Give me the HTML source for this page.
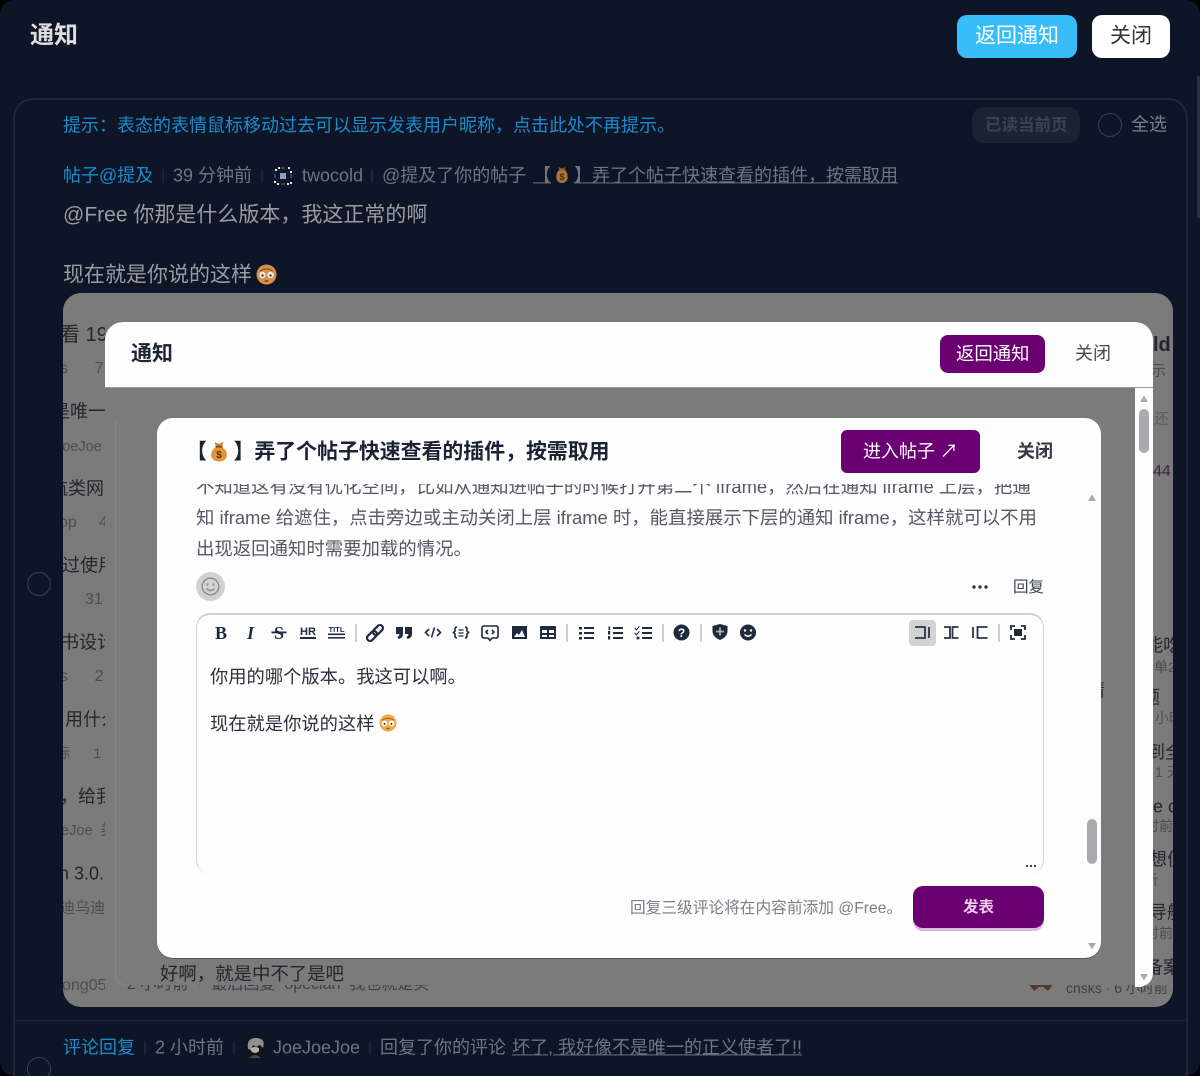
<!DOCTYPE html>
<html lang="zh"><head><meta charset="utf-8"><title>通知</title>
<style>
html,body{margin:0;padding:0;background:#000;}
body{width:1200px;height:1076px;overflow:hidden;position:relative;font-family:"Liberation Sans","Noto Sans CJK SC",sans-serif;}
#p{position:absolute;left:0;top:0;width:1200px;height:1076px;background:#0d1527;border-radius:14px;overflow:hidden;}
.t{position:absolute;transform:translateY(calc(-50% + 1px));line-height:1.4;white-space:nowrap;}
.b{position:absolute;box-sizing:border-box;}
.m{font-size:18px;color:#6f7480;}
.bl{color:#1a8ccb;}
.k{color:#23262e;}
.g{color:#4c4c52;}
.clip{position:absolute;overflow:hidden;}
svg{position:absolute;overflow:visible;}
.tick{position:absolute;width:2px;height:14px;background:#1d2638;}
</style></head><body>
<div id="p">
<div class="t" style="left:30px;top:35px;font-size:24px;font-weight:700;color:#dedede;">通知</div>
<div class="b" style="left:957px;top:15px;width:120px;height:43px;background:#38bdf8;border-radius:10px;"></div>
<div class="t" style="left:975px;top:35px;font-size:21px;color:#fff;">返回通知</div>
<div class="b" style="left:1092px;top:15px;width:78px;height:43px;background:#fff;border-radius:10px;"></div>
<div class="t" style="left:1110px;top:35px;font-size:21px;color:#333;">关闭</div>
<div class="b" style="left:1197px;top:76px;width:3px;height:142px;background:#283245;"></div>

<div class="b" style="left:13px;top:98px;width:1175px;height:1000px;border:2px solid #1f293c;border-radius:20px;"></div>
<div class="b" style="left:15px;top:1020px;width:1171px;height:1px;background:#1f293c;"></div>

<div class="t bl" style="left:63px;top:125px;font-size:18px;">提示：表态的表情鼠标移动过去可以显示发表用户昵称，点击此处不再提示。</div>
<div class="b" style="left:972px;top:107px;width:108px;height:36px;background:#1b2332;border-radius:12px;"></div>
<div class="t" style="left:985px;top:125px;font-size:16.5px;font-weight:700;color:#3c4350;">已读当前页</div>
<div class="b" style="left:1098px;top:113px;width:24px;height:24px;border:1px solid #3a4252;border-radius:50%;"></div>
<div class="t" style="left:1131px;top:124px;font-size:18px;color:#7b8089;">全选</div>

<div class="t bl" style="left:63px;top:175px;font-size:18px;">帖子@提及</div>
<div class="tick" style="left:162px;top:169px;"></div>
<div class="t m" style="left:173px;top:175px;">39 分钟前</div>
<div class="tick" style="left:261px;top:169px;"></div>
<svg style="left:274px;top:167px;" width="18" height="18" viewBox="0 0 18 18"><rect x="6" y="6" width="6" height="6" fill="#7ea3d6"/><g fill="#dfe6f0"><rect x="1" y="2" width="2" height="2"/><rect x="4" y="0" width="2" height="2"/><rect x="14" y="0" width="2" height="2"/><rect x="16" y="4" width="2" height="2"/><rect x="0" y="14" width="2" height="2"/><rect x="3" y="16" width="2" height="2"/><rect x="13" y="16" width="2" height="2"/><rect x="16" y="15" width="2" height="2"/></g><g fill="#345"><rect x="0" y="7" width="2" height="4"/><rect x="16" y="7" width="2" height="4"/><rect x="7" y="0" width="4" height="2"/><rect x="7" y="16" width="4" height="2"/></g></svg>
<div class="t m" style="left:302px;top:175px;">twocold</div>
<div class="tick" style="left:371px;top:169px;"></div>
<div class="t m" style="left:382px;top:175px;">@提及了你的帖子</div>
<div class="t m" style="left:533px;top:175px;text-decoration:underline;">【<span style="display:inline-block;width:23px;"></span>】弄了个帖子快速查看的插件，按需取用</div>
<svg style="left:553px;top:166px;" width="18" height="18" viewBox="0 0 18 18"><path d="M6 4C2 8 2 17 9 17S16 8 12 4Z" fill="#a9753a"/><path d="M5.500 1L9 2.500 12.500 1 11.500 4.500H6.500Z" fill="#8a5a28"/><text x="9" y="14" font-size="9" font-weight="700" text-anchor="middle" fill="#4c3014" font-family="Liberation Sans">$</text></svg>

<div class="t" style="left:63px;top:214px;font-size:21px;color:#9a9ca2;">@Free 你那是什么版本，我这正常的啊</div>
<div class="t" style="left:63px;top:274px;font-size:21px;color:#9a9ca2;">现在就是你说的这样</div>
<svg style="left:256px;top:264px;" width="21" height="21" viewBox="0 0 21 21"><circle cx="10.500" cy="10.500" r="10" fill="#d98f48"/><path d="M4 7Q10.500 3 17 7" stroke="#8a5226" stroke-width="1.200" fill="none"/><circle cx="6.500" cy="11" r="3.200" fill="#eee"/><circle cx="14.500" cy="11" r="3.200" fill="#eee"/><circle cx="6.500" cy="11.500" r="1.200" fill="#333"/><circle cx="14.500" cy="11.500" r="1.200" fill="#333"/><ellipse cx="10.500" cy="17" rx="2" ry="1" fill="#8a5226"/></svg>

<!-- gray image -->
<div class="b" style="left:63px;top:293px;width:1110px;height:714px;background:#7b7b7b;border-radius:18px;"></div>

<div class="clip" style="left:63px;top:300px;width:42px;height:700px;">
 <div class="t k" style="left:-3px;top:34px;font-size:20px;">看 196</div>
 <div class="t g" style="left:-3px;top:68px;font-size:16px;">s&nbsp;&nbsp;&nbsp;&nbsp;&nbsp;&nbsp;7</div>
 <div class="t k" style="left:-11px;top:111px;font-size:18px;">是唯一</div>
 <div class="t g" style="left:-8px;top:146px;font-size:14.500px;">JoeJoe</div>
 <div class="t k" style="left:-13px;top:188px;font-size:18px;">航类网</div>
 <div class="t g" style="left:-4px;top:222px;font-size:16px;">op&nbsp;&nbsp;&nbsp;&nbsp;&nbsp;4</div>
 <div class="t k" style="left:-1px;top:265px;font-size:18px;">过使用</div>
 <div class="t g" style="left:22px;top:299px;font-size:16px;">31</div>
 <div class="t k" style="left:-2px;top:342px;font-size:18px;">书设计</div>
 <div class="t g" style="left:-3px;top:376px;font-size:16px;">s&nbsp;&nbsp;&nbsp;&nbsp;&nbsp;&nbsp;2</div>
 <div class="t k" style="left:2px;top:419px;font-size:18px;">用什么</div>
 <div class="t g" style="left:-7px;top:453px;font-size:14px;">标&nbsp;&nbsp;&nbsp;&nbsp;&nbsp;&nbsp;1</div>
 <div class="t k" style="left:-3px;top:496px;font-size:18px;">，给我</div>
 <div class="t g" style="left:-2px;top:530px;font-size:14.500px;">eJoe&nbsp;&nbsp;美</div>
 <div class="t k" style="left:-4px;top:573px;font-size:18px;">n 3.0.</div>
 <div class="t g" style="left:-3px;top:607px;font-size:15px;">迪乌迪</div>
 <div class="t g" style="left:-1px;top:685px;font-size:16px;">ong05</div>
</div>
<div class="clip" style="left:1153px;top:300px;width:20px;height:700px;">
 <div class="t k" style="left:0px;top:44px;font-size:20px;font-weight:700;">ld</div>
 <div class="t g" style="left:-2px;top:70px;font-size:15px;">示</div>
 <div class="t" style="left:1px;top:118px;font-size:15px;color:#5c5c62;">还</div>
 <div class="t" style="left:0px;top:171px;font-size:16px;color:#3a2340;">44</div>
 <div class="t k" style="left:-8px;top:345px;font-size:18px;">能吃</div>
 <div class="t g" style="left:1px;top:367px;font-size:14px;">单2</div>
 <div class="t k" style="left:-11px;top:397px;font-size:18px;">题</div>
 <div class="t g" style="left:2px;top:418px;font-size:14px;">小时</div>
 <div class="t k" style="left:-6px;top:452px;font-size:18px;">到全</div>
 <div class="t g" style="left:2px;top:472px;font-size:14px;">1 天</div>
 <div class="t k" style="left:0px;top:506px;font-size:18px;">e c</div>
 <div class="t g" style="left:-8px;top:526px;font-size:14px;">时前</div>
 <div class="t k" style="left:-4px;top:559px;font-size:18px;">想便</div>
 <div class="t g" style="left:-9px;top:580px;font-size:14px;">新</div>
 <div class="t k" style="left:-4px;top:612px;font-size:18px;">导航</div>
 <div class="t g" style="left:-8px;top:633px;font-size:14px;">时前</div>
 <div class="t k" style="left:-8px;top:667px;font-size:18px;">备案</div>
</div>

<!-- faint frame inside second layer -->
<div class="b" style="left:115px;top:420px;width:10px;height:565px;border-left:1px solid #878787;border-bottom:1px solid #878787;border-bottom-left-radius:10px;"></div>

<!-- behind text -->
<div class="t k" style="left:160px;top:973px;font-size:18.400px;">好啊，就是中不了是吧</div>
<div class="clip" style="left:120px;top:985px;width:1060px;height:10px;">
 <div class="t" style="left:7px;top:-1px;font-size:16px;color:#3c3f47;">2 小时前&nbsp;&nbsp;·&nbsp;&nbsp;最后回复&nbsp;&nbsp;opecian&nbsp;&nbsp;我也就是买</div>
 <svg style="left:908px;top:-2px;" width="26" height="9" viewBox="0 0 26 9"><path d="M0 0H26L20 8 15 4 11 4 6 8Z" fill="#54392a"/></svg>
 <div class="t" style="left:946px;top:3px;font-size:14px;color:#3c3f47;">cnsks · 6 小时前</div>
</div>
<div class="t" style="left:1087px;top:690px;font-size:18px;color:#2a2a30;">情</div>

<!-- second layer -->
<div class="b" style="left:105px;top:322px;width:1048px;height:66px;background:#fdfdfe;border-radius:18px 18px 0 0;border-bottom:1px solid #9a9a9a;"></div>
<div class="b" style="left:1135px;top:388px;width:18px;height:599px;background:#fdfdfe;border-radius:0 0 14px 0;"></div>
<div class="t" style="left:131px;top:353px;font-size:21px;font-weight:700;color:#1c2436;">通知</div>
<div class="b" style="left:940px;top:335px;width:105px;height:38px;background:#6a0072;border-radius:8px;"></div>
<div class="t" style="left:956px;top:353px;font-size:18.400px;color:#fff;">返回通知</div>
<div class="t" style="left:1075px;top:353px;font-size:18px;color:#444a55;">关闭</div>
<svg style="left:1139px;top:395px;" width="10" height="8" viewBox="0 0 10 8"><path d="M5 0.500L9 7H1Z" fill="#a9a9ae"/></svg>
<div class="b" style="left:1139px;top:409px;width:10px;height:44px;background:#a9a9ae;border-radius:5px;"></div>
<svg style="left:1139px;top:973px;" width="10" height="8" viewBox="0 0 10 8"><path d="M5 7.500L9 1H1Z" fill="#a9a9ae"/></svg>

<!-- third layer -->
<div class="b" style="left:157px;top:418px;width:944px;height:540px;background:#fdfdfe;border-radius:16px;box-shadow:0 1px 0 #555;"></div>
<div class="t" style="left:186px;top:451px;font-size:20.900px;font-weight:700;color:#1a2233;">【</div>
<svg style="left:209px;top:441px;" width="20" height="21" viewBox="0 0 20 21"><path d="M7 6C0 10 0 20.500 10 20.500S20 10 13 6Z" fill="#e0953c"/><path d="M5.500 1L10 3 14.500 1 13 6H7Z" fill="#c97f2c"/><rect x="6.500" y="5" width="7" height="1.600" fill="#7a4a18"/><text x="10" y="17" font-size="10" font-weight="700" text-anchor="middle" fill="#5c3510" font-family="Liberation Sans">$</text></svg>
<div class="t" style="left:233.500px;top:451px;font-size:20.900px;font-weight:700;color:#1a2233;">】弄了个帖子快速查看的插件，按需取用</div>
<div class="b" style="left:841px;top:430px;width:139px;height:43px;background:#6a0072;border-radius:6px;"></div>
<div class="t" style="left:863px;top:451px;font-size:18px;color:#fff;">进入帖子 ↗</div>
<div class="t" style="left:1017px;top:451px;font-size:18px;font-weight:700;color:#333845;">关闭</div>

<div class="clip" style="left:196px;top:484px;width:880px;height:14px;">
 <div class="t" style="left:0;top:2px;font-size:18.400px;color:#555963;">不知道这有没有优化空间，比如从通知进帖子的时候打开第二个 iframe，然后在通知 iframe 上层，把通</div>
</div>
<div class="t" style="left:196px;top:517px;font-size:18.400px;color:#555963;">知 iframe 给遮住，点击旁边或主动关闭上层 iframe 时，能直接展示下层的通知 iframe，这样就可以不用</div>
<div class="t" style="left:196px;top:548px;font-size:18.400px;color:#555963;">出现返回通知时需要加载的情况。</div>

<svg style="left:1087px;top:494px;" width="10" height="8" viewBox="0 0 10 8"><path d="M5 0.500L9 7H1Z" fill="#a9a9ae"/></svg>
<div class="b" style="left:1087px;top:819px;width:10px;height:45px;background:#a9a9ae;border-radius:5px;"></div>
<svg style="left:1087px;top:942px;" width="10" height="8" viewBox="0 0 10 8"><path d="M5 7.500L9 1H1Z" fill="#a9a9ae"/></svg>

<div class="b" style="left:196px;top:572px;width:29px;height:29px;border-radius:50%;background:#d2d2d2;"></div>
<svg style="left:201px;top:577px;" width="19" height="19" viewBox="0 0 19 19"><circle cx="9.500" cy="9.500" r="8.300" fill="none" stroke="#8b8b8b" stroke-width="1.400"/><circle cx="6.500" cy="7.500" r="1.100" fill="#8b8b8b"/><circle cx="12.500" cy="7.500" r="1.100" fill="#8b8b8b"/><path d="M5.500 11.500Q9.500 15.500 13.500 11.500" fill="none" stroke="#8b8b8b" stroke-width="1.400"/></svg>
<svg style="left:971px;top:584px;" width="18" height="6" viewBox="0 0 18 6"><circle cx="3" cy="3" r="1.700" fill="#333"/><circle cx="9" cy="3" r="1.700" fill="#333"/><circle cx="15" cy="3" r="1.700" fill="#333"/></svg>
<div class="t" style="left:1013px;top:587px;font-size:15.500px;color:#3c4250;">回复</div>

<!-- editor -->
<div class="b" style="left:196px;top:613px;width:848px;height:261px;border-top:2px solid #cfcfcf;border-left:1px solid #d4d4d4;border-right:1px solid #d4d4d4;border-radius:14px;"></div>
<div class="b" style="left:909px;top:620px;width:27px;height:26px;background:#d2d2d2;border-radius:4px;"></div>

<svg style="left:0;top:0;" width="1200" height="1076" viewBox="0 0 1200 1076">
<g fill="#1f2a3d" stroke="none">
<text x="221" y="639" font-family="Liberation Serif" font-weight="700" font-size="18" text-anchor="middle">B</text>
<text x="250.500" y="639" font-family="Liberation Serif" font-style="italic" font-weight="700" font-size="18" text-anchor="middle">I</text>
<text x="279" y="639" font-family="Liberation Serif" font-weight="700" font-size="18" text-anchor="middle">S</text>
<rect x="271.500" y="631.500" width="15" height="1.800"/>
<text x="308" y="635" font-family="Liberation Sans" font-weight="700" font-size="11" text-anchor="middle">HR</text>
<rect x="300" y="637" width="16" height="2"/>
<text x="336.500" y="632" font-family="Liberation Sans" font-weight="700" font-size="7.500" text-anchor="middle">TITL</text>
<rect x="328" y="633.500" width="17" height="1.600"/><rect x="328" y="637" width="17" height="1.600"/>
</g>
<g fill="none" stroke="#1f2a3d" stroke-width="2.200" transform="rotate(-45 375 633)">
<rect x="365" y="630" width="11.500" height="6" rx="3"/><rect x="373.500" y="630" width="11.500" height="6" rx="3"/>
</g>
<path d="M396 627h7v7q0 4-4.500 5l-1-2q2-1 2-3h-3.500zM405 627h7v7q0 4-4.500 5l-1-2q2-1 2-3h-3.500z" fill="#1f2a3d"/>
<g fill="none" stroke="#1f2a3d" stroke-width="1.600">
<path d="M429 629l-3.500 3.500 3.500 3.500M437 629l3.500 3.500-3.500 3.500M434.500 627.500l-3 10"/>
<path d="M457 627q-2 0-2 2v2l-1.500 1.500 1.500 1.500v2q0 2 2 2M465 627q2 0 2 2v2l1.500 1.500-1.500 1.500v2q0 2-2 2"/>
<path d="M458.500 630h5M458.500 633h5M458.500 636h5" stroke-width="1.200"/>
<path d="M484 626h12q2 0 2 2v8q0 2-2 2h-4l-2 2.500-2-2.500h-4q-2 0-2-2v-8q0-2 2-2z"/>
<path d="M488 630l-2 2 2 2M492 630l2 2-2 2"/>
</g>
<g fill="#1f2a3d">
<path d="M512 626h15v13h-15z"/><path d="M514 637l3-4 2 2 3-5 3 7z" fill="#fdfdfe"/>
<path d="M541 626h14q1 0 1 1v11q0 1-1 1h-14q-1 0-1-1v-11q0-1 1-1zm1 4v3h5v-3zm7 0v3h5v-3zm-7 5v2h5v-2zm7 0v2h5v-2z" fill-rule="evenodd"/>
<rect x="579" y="627" width="3" height="2.500"/><rect x="584" y="627" width="10" height="2"/>
<rect x="579" y="632" width="3" height="2.500"/><rect x="584" y="632" width="10" height="2"/>
<rect x="579" y="637" width="3" height="2.500"/><rect x="584" y="637" width="10" height="2"/>
<rect x="608.500" y="626.500" width="1.600" height="3.500"/><rect x="613" y="627" width="10" height="2"/>
<rect x="608" y="631" width="2.200" height="3.500"/><rect x="613" y="632" width="10" height="2"/>
<rect x="608" y="636" width="2.200" height="3.500"/><rect x="613" y="637" width="10" height="2"/>
<rect x="642" y="627" width="10" height="2"/><rect x="642" y="632" width="10" height="2"/><rect x="642" y="637" width="10" height="2"/>
<circle cx="638" cy="638" r="1.500"/>
<path d="M635 627.500l1.500 1.500 2.500-3 .8.600-3.300 4-2.300-2.300zM635 632.500l1.500 1.500 2.500-3 .8.600-3.300 4-2.300-2.300z"/>
<circle cx="681.500" cy="632.500" r="8"/>
<circle cx="748" cy="632.500" r="8"/>
<path d="M712.500 626l7.500-2 7.500 2v5q0 6-7.500 9-7.500-3-7.500-9z"/>
</g>
<text x="681.500" y="637" font-family="Liberation Sans" font-weight="700" font-size="12" text-anchor="middle" fill="#fdfdfe">?</text>
<path d="M720 627.500v8M716 631.500h8" stroke="#aab" stroke-width="1.800"/>
<circle cx="745" cy="630.500" r="1.200" fill="#fdfdfe"/><circle cx="751" cy="630.500" r="1.200" fill="#fdfdfe"/>
<path d="M744.500 634.500q3.500 3.500 7 0" stroke="#fdfdfe" stroke-width="1.400" fill="none"/>
<g fill="#cfcfcf">
<rect x="355" y="624" width="2" height="18"/><rect x="566" y="624" width="2" height="18"/><rect x="662" y="624" width="2" height="18"/><rect x="700" y="624" width="2" height="18"/><rect x="998" y="624" width="2" height="18"/>
</g>
<g fill="none" stroke="#2b3446" stroke-width="1.800">
<path d="M915 627h10v11h-10M929 627v11"/>
<path d="M944 627h6v11h-6M958.500 627h-6v11h6"/>
<path d="M973 627v11M987.500 627h-10v11h10"/>
</g>
<g fill="none" stroke="#1f2a3d" stroke-width="1.800">
<path d="M1011 630v-4h4M1021 626h4v4M1025 635v4h-4M1015 639h-4v-4"/>
</g>
<rect x="1014" y="629" width="8" height="7" fill="#1f2a3d"/>
<g fill="#2a2f3a"><circle cx="1027" cy="866" r="1.100"/><circle cx="1031" cy="866" r="1.100"/><circle cx="1035" cy="866" r="1.100"/></g>
</svg>

<div class="t" style="left:210px;top:676px;font-size:18.300px;color:#2c313c;">你用的哪个版本。我这可以啊。</div>
<div class="t" style="left:210px;top:723px;font-size:18.300px;color:#2c313c;">现在就是你说的这样</div>
<svg style="left:379px;top:714px;" width="18" height="18" viewBox="0 0 21 21"><circle cx="10.500" cy="10.500" r="10" fill="#f5a94a"/><path d="M4 7Q10.500 3 17 7" stroke="#9a5c28" stroke-width="1.200" fill="none"/><circle cx="6.500" cy="11" r="3.200" fill="#fff"/><circle cx="14.500" cy="11" r="3.200" fill="#fff"/><circle cx="6.500" cy="11.500" r="1.200" fill="#333"/><circle cx="14.500" cy="11.500" r="1.200" fill="#333"/><ellipse cx="10.500" cy="17" rx="2" ry="1" fill="#9a5c28"/></svg>

<div class="t" style="left:630px;top:908px;font-size:15.700px;color:#7c7f86;">回复三级评论将在内容前添加 @Free。</div>
<div class="b" style="left:913px;top:886px;width:131px;height:42px;background:#6a0072;border-radius:10px;box-shadow:0 3px 0 #dcb9df;"></div>
<div class="t" style="left:963px;top:907px;font-size:15.500px;font-weight:700;color:#efcdef;">发表</div>

<!-- list circles -->
<div class="b" style="left:27px;top:572px;width:24px;height:24px;border:1px solid #3a4252;border-radius:50%;"></div>
<div class="b" style="left:27px;top:1057px;width:24px;height:24px;border:1px solid #3a4252;border-radius:50%;"></div>

<!-- bottom row -->
<div class="t bl" style="left:63px;top:1047px;font-size:18px;">评论回复</div>
<div class="tick" style="left:144px;top:1041px;"></div>
<div class="t m" style="left:155px;top:1047px;">2 小时前</div>
<div class="tick" style="left:233px;top:1041px;"></div>
<svg style="left:244px;top:1036px;" width="22" height="22" viewBox="0 0 22 22"><circle cx="11" cy="11" r="11" fill="#141414"/><path d="M4 13Q2 2 12 2T19 12L16 9 12 11 9 9 7 14Z" fill="#8f8f8f"/><path d="M7 12q4-2 8 0v3q-4 4-8 0z" fill="#b9b0a6"/><path d="M5 22q6-6 12 0z" fill="#3e4a4a"/></svg>
<div class="t m" style="left:273px;top:1047px;">JoeJoeJoe</div>
<div class="tick" style="left:369px;top:1041px;"></div>
<div class="t m" style="left:380px;top:1047px;">回复了你的评论</div>
<div class="t m" style="left:512px;top:1047px;text-decoration:underline;">坏了, 我好像不是唯一的正义使者了!!</div>
</div>
</body></html>
